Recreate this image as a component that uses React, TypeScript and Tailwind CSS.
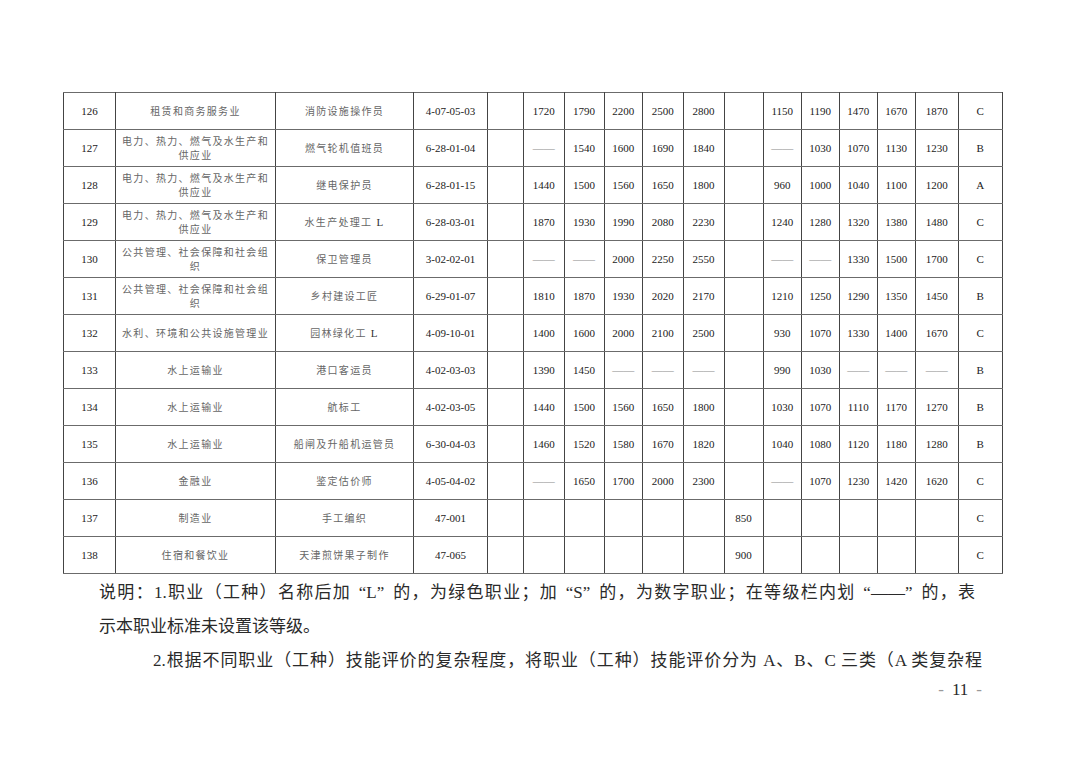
import React from 'react';

type Row = {
  no: number;
  industry: string[];
  job: string;
  code: string;
  a: string[];
  mid: string;
  b: string[];
  grade: string;
};

const D = '——';
const E = ['', '', '', '', ''];
const POWER = ['电力、热力、燃气及水生产和', '供应业'];
const PUBLIC = ['公共管理、社会保障和社会组', '织'];

const rows: Row[] = [
  { no: 126, industry: ['租赁和商务服务业'], job: '消防设施操作员', code: '4-07-05-03', a: ['1720', '1790', '2200', '2500', '2800'], mid: '', b: ['1150', '1190', '1470', '1670', '1870'], grade: 'C' },
  { no: 127, industry: POWER, job: '燃气轮机值班员', code: '6-28-01-04', a: [D, '1540', '1600', '1690', '1840'], mid: '', b: [D, '1030', '1070', '1130', '1230'], grade: 'B' },
  { no: 128, industry: POWER, job: '继电保护员', code: '6-28-01-15', a: ['1440', '1500', '1560', '1650', '1800'], mid: '', b: ['960', '1000', '1040', '1100', '1200'], grade: 'A' },
  { no: 129, industry: POWER, job: '水生产处理工 L', code: '6-28-03-01', a: ['1870', '1930', '1990', '2080', '2230'], mid: '', b: ['1240', '1280', '1320', '1380', '1480'], grade: 'C' },
  { no: 130, industry: PUBLIC, job: '保卫管理员', code: '3-02-02-01', a: [D, D, '2000', '2250', '2550'], mid: '', b: [D, D, '1330', '1500', '1700'], grade: 'C' },
  { no: 131, industry: PUBLIC, job: '乡村建设工匠', code: '6-29-01-07', a: ['1810', '1870', '1930', '2020', '2170'], mid: '', b: ['1210', '1250', '1290', '1350', '1450'], grade: 'B' },
  { no: 132, industry: ['水利、环境和公共设施管理业'], job: '园林绿化工 L', code: '4-09-10-01', a: ['1400', '1600', '2000', '2100', '2500'], mid: '', b: ['930', '1070', '1330', '1400', '1670'], grade: 'C' },
  { no: 133, industry: ['水上运输业'], job: '港口客运员', code: '4-02-03-03', a: ['1390', '1450', D, D, D], mid: '', b: ['990', '1030', D, D, D], grade: 'B' },
  { no: 134, industry: ['水上运输业'], job: '航标工', code: '4-02-03-05', a: ['1440', '1500', '1560', '1650', '1800'], mid: '', b: ['1030', '1070', '1110', '1170', '1270'], grade: 'B' },
  { no: 135, industry: ['水上运输业'], job: '船闸及升船机运管员', code: '6-30-04-03', a: ['1460', '1520', '1580', '1670', '1820'], mid: '', b: ['1040', '1080', '1120', '1180', '1280'], grade: 'B' },
  { no: 136, industry: ['金融业'], job: '鉴定估价师', code: '4-05-04-02', a: [D, '1650', '1700', '2000', '2300'], mid: '', b: [D, '1070', '1230', '1420', '1620'], grade: 'C' },
  { no: 137, industry: ['制造业'], job: '手工编织', code: '47-001', a: E, mid: '850', b: E, grade: 'C' },
  { no: 138, industry: ['住宿和餐饮业'], job: '天津煎饼果子制作', code: '47-065', a: E, mid: '900', b: E, grade: 'C' },
];

const widths = [52, 160, 138, 74, 36, 40.6, 40, 38.4, 40.6, 41, 39, 38.4, 37.6, 38.4, 37.6, 43.2, 44];

const serif = "font-['Liberation_Serif','Noto_Sans_CJK_SC',serif]";
const td = 'h-[37px] border-x border-x-[#444] border-y border-y-[#6b6b6b] p-0 text-center align-middle';

function Num({ v }: { v: string }) {
  if (v === D) return <span className="text-[#8a8a8a]">{D}</span>;
  return <>{v}</>;
}

function Cjk({ text }: { text: string }) {
  const parts = text.split(' L');
  return (
    <span className="font-['Noto_Sans_CJK_SC',sans-serif] text-[10px] tracking-[1.3px] text-[#666]">
      {parts[0]}
      {parts.length > 1 && <span className={`${serif} text-[11px] text-[#333]`}> L</span>}
    </span>
  );
}

// quoted term with the wide spacing of full-width quotes
function Q({ children }: { children: React.ReactNode }) {
  return (
    <span className="px-[0.45em]">
      “{children}”
    </span>
  );
}

export default function App() {
  return (
    <div className={`min-h-[764px] w-[1080px] bg-white pl-[63px] pt-[92px] ${serif} text-[#222]`}>
      <table className="table-fixed border-collapse text-[11px] leading-[14px]" style={{ width: 939 }}>
        <colgroup>
          {widths.map((w, i) => (
            <col key={i} style={{ width: w }} />
          ))}
        </colgroup>
        <tbody>
          {rows.map((r) => (
            <tr key={r.no}>
              <td className={td}>{r.no}</td>
              <td className={`${td} leading-[14px]`}>
                {r.industry.map((l, i) => (
                  <div key={i} className="whitespace-nowrap">
                    <Cjk text={l} />
                  </div>
                ))}
              </td>
              <td className={`${td} whitespace-nowrap`}>
                <Cjk text={r.job} />
              </td>
              <td className={td}>{r.code}</td>
              <td className={td}></td>
              {r.a.map((v, i) => (
                <td key={'a' + i} className={td}>
                  <Num v={v} />
                </td>
              ))}
              <td className={td}>{r.mid}</td>
              {r.b.map((v, i) => (
                <td key={'b' + i} className={td}>
                  <Num v={v} />
                </td>
              ))}
              <td className={td}>{r.grade}</td>
            </tr>
          ))}
        </tbody>
      </table>

      <div className="mt-[2px] pl-[36px] text-[17px] leading-[34px] text-[#2a2a2a]">
        <p className="w-[876px] text-justify [text-align-last:justify]">
          说明：1.职业（工种）名称后加<Q>L</Q>的，为绿色职业；加<Q>S</Q>的，为数字职业；在等级栏内划<Q>——</Q>的，表
        </p>
        <p>示本职业标准未设置该等级。</p>
        <p className="w-[883px] pl-[54px] text-justify [text-align-last:justify]">
          2.根据不同职业（工种）技能评价的复杂程度，将职业（工种）技能评价分为 A、B、C 三类（A 类复杂程
        </p>
        <div className="flex w-[883px] items-center justify-end gap-[8px] leading-[24px]">
          <span className="text-[#999]">-</span>
          <span>11</span>
          <span className="text-[#999]">-</span>
        </div>
      </div>
    </div>
  );
}
